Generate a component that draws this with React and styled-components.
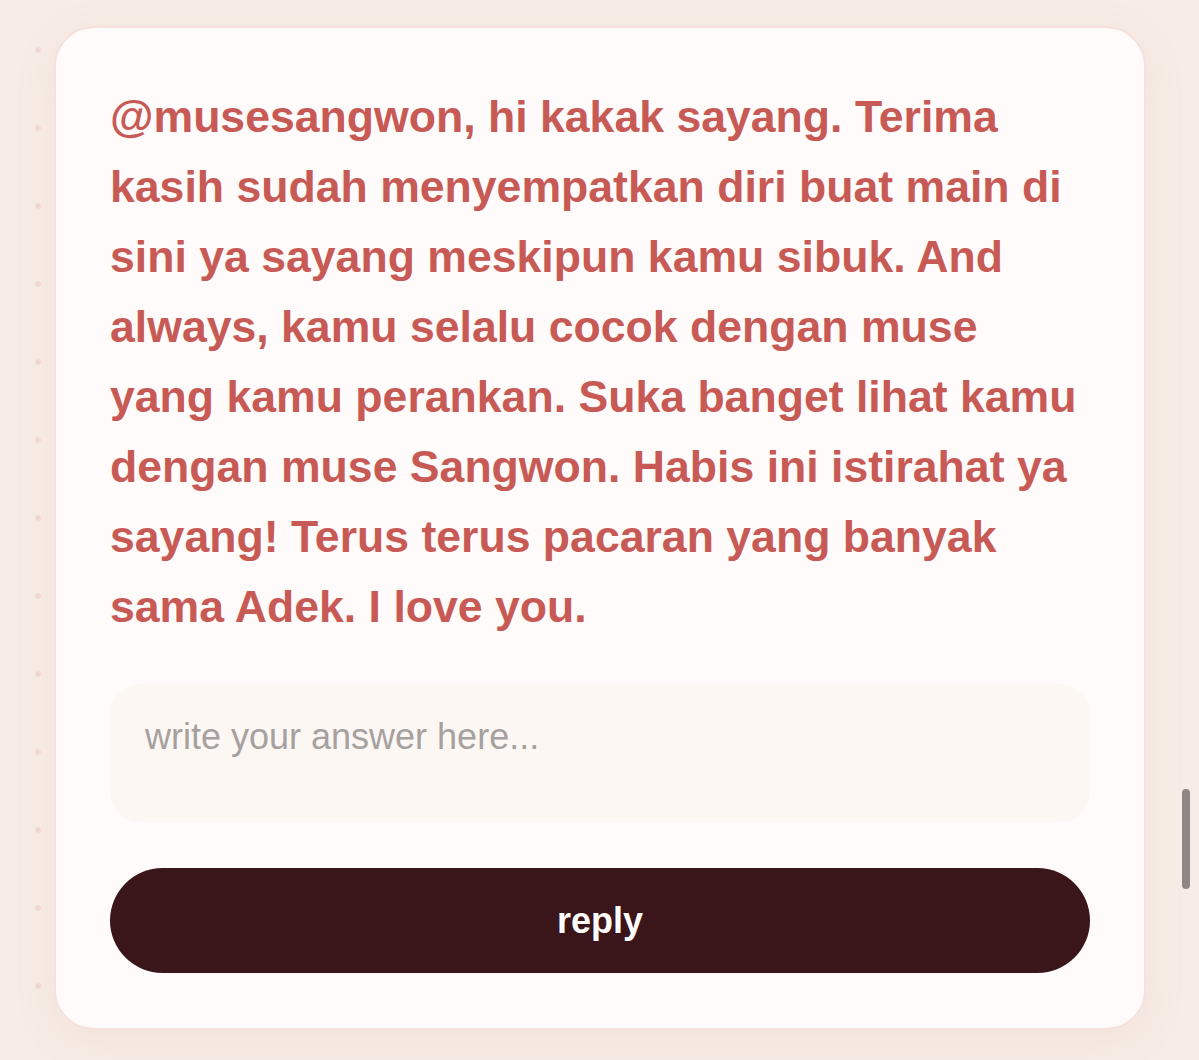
import React from 'react';
import styled, { createGlobalStyle } from 'styled-components';

const GlobalStyle = createGlobalStyle`
    html, body {
        margin: 0;
        padding: 0;
        height: 100%;
        overflow: hidden;
    }

    body {
        background-color: #f7ede6;
        background-image: radial-gradient(circle, #efd9d5 2.5px, transparent 3px);
        background-size: 78px 78px;
        background-position: -1px 11px;
        font-family: "Liberation Sans", Arial, Helvetica, sans-serif;
    }
`

const Page = styled.div`
    position: relative;
    min-height: 1060px;
    padding: 26px 53px 0 54px;
    box-sizing: border-box;
`

const Card = styled.div`
    width: 1092px;
    box-sizing: border-box;
    background: #fefbfa;
    border: 2px solid #f5e1de;
    border-radius: 40px;
    padding: 54px 54px 55px;
    box-shadow: 0 10px 40px rgba(200, 150, 130, 0.12);
    display: flex;
    flex-direction: column;
`

const Message = styled.p`
    margin: 0;
    color: #c85a56;
    font-weight: 700;
    font-size: 44.6px;
    line-height: 70px;
`

const Answer = styled.textarea`
    margin-top: 42px;
    height: 138px;
    box-sizing: border-box;
    resize: none;
    border: none;
    outline: none;
    border-radius: 30px;
    background: #fcf7f3;
    padding: 33px 35px;
    font-family: inherit;
    font-size: 36px;
    line-height: 40px;
    color: #5a4a48;

    &::placeholder {
        color: #a6a19f;
    }
`

const ReplyButton = styled.button`
    margin-top: 46px;
    height: 105px;
    border: none;
    border-radius: 53px;
    background: #3a1519;
    color: #fffdfc;
    font-family: inherit;
    font-weight: 700;
    font-size: 36px;
    cursor: pointer;
`

const ScrollThumb = styled.div`
    position: absolute;
    top: 789px;
    right: 9px;
    width: 8px;
    height: 100px;
    border-radius: 4px;
    background: #8d8785;
`

const App = () => {
    return (
        <>
            <GlobalStyle />
            <Page>
                <Card>
                    <Message>
                        @musesangwon, hi kakak sayang. Terima kasih sudah menyempatkan diri buat main di sini ya sayang meskipun kamu sibuk. And always, kamu selalu cocok dengan muse yang kamu perankan. Suka banget lihat kamu dengan muse Sangwon. Habis ini istirahat ya sayang! Terus terus pacaran yang banyak sama Adek. I love you.
                    </Message>
                    <Answer placeholder="write your answer here..." />
                    <ReplyButton>reply</ReplyButton>
                </Card>
                <ScrollThumb />
            </Page>
        </>
    )
}

export default App
